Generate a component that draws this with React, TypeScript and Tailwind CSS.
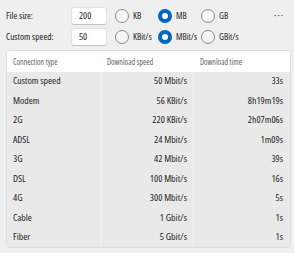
import React from "react";

const rows = [
  ["Custom speed", "50 Mbit/s", "33s"],
  ["Modem", "56 KBit/s", "8h19m19s"],
  ["2G", "220 KBit/s", "2h07m06s"],
  ["ADSL", "24 Mbit/s", "1m09s"],
  ["3G", "42 Mbit/s", "39s"],
  ["DSL", "100 Mbit/s", "16s"],
  ["4G", "300 Mbit/s", "5s"],
  ["Cable", "1 Gbit/s", "1s"],
  ["Fiber", "5 Gbit/s", "1s"],
];

const Radio = ({ label, checked }: { label: string; checked?: boolean }) => (
  <div className="w-[43px] flex items-center shrink-0">
    {checked ? (
      <span className="w-[14px] h-[14px] rounded-full border-[4px] border-[#0067c0] bg-white shrink-0" />
    ) : (
      <span className="w-[14px] h-[14px] rounded-full border border-[#8a8a8a] bg-[#f6f6f6] shrink-0" />
    )}
    <span className="ml-[4px] text-[9px] text-[#1b1b1b] whitespace-nowrap">{label}</span>
  </div>
);

const NumInput = ({ value }: { value: string }) => (
  <div className="w-[36px] h-[18px] bg-white rounded-[3px] border border-[#e3e3e3] border-b-[#c4c4c4] flex items-center pl-[7px] text-[9.6px] text-[#1b1b1b]">
    {value}
  </div>
);

export default function App() {
  return (
    <div className="w-[294px] h-[253px] bg-[#efefef] overflow-hidden font-['Open_Sans','Noto_Sans',sans-serif] [font-stretch:87.5%]">
      <div className="pl-[6px] pt-[7px] flex flex-col gap-[3px]">
        <div className="flex items-center h-[18px]">
          <span className="w-[65px] text-[9.4px] text-[#1b1b1b] whitespace-nowrap">File size:</span>
          <NumInput value="200" />
          <div className="flex ml-[8px]">
            <Radio label="KB" />
            <Radio label="MB" checked />
            <Radio label="GB" />
          </div>
          <span className="ml-[30px] text-[11px] tracking-[1px] text-[#333] leading-none -mt-[4px]">···</span>
        </div>
        <div className="flex items-center h-[18px]">
          <span className="w-[65px] text-[9.4px] text-[#1b1b1b] whitespace-nowrap">Custom speed:</span>
          <NumInput value="50" />
          <div className="flex ml-[8px]">
            <Radio label="KBit/s" />
            <Radio label="MBit/s" checked />
            <Radio label="GBit/s" />
          </div>
        </div>
      </div>
      <div className="mt-[4px] ml-[6px] w-[285px] h-[198px] rounded-[4px] border border-[#dedede] bg-[#e9e9e9] overflow-hidden">
        <div className="h-[21px] bg-white flex items-center text-[8px] text-[#5f5f5f]">
          <span className="w-[94px] pl-[6px]">Connection type</span>
          <span className="w-[93px] pl-[6px]">Download speed</span>
          <span className="pl-[6px]">Download time</span>
        </div>
        {rows.map(([name, speed, time]) => (
          <div key={name} className="h-[19.5px] flex items-center text-[9.8px] text-[#1b1b1b]">
            <span className="w-[94px] pl-[6px] h-full flex items-center border-r border-[#f2f2f2]">{name}</span>
            <span className="w-[93px] pr-[6px] h-full flex items-center justify-end border-r border-[#f2f2f2]">{speed}</span>
            <span className="flex-1 pr-[7px] h-full flex items-center justify-end">{time}</span>
          </div>
        ))}
      </div>
    </div>
  );
}
